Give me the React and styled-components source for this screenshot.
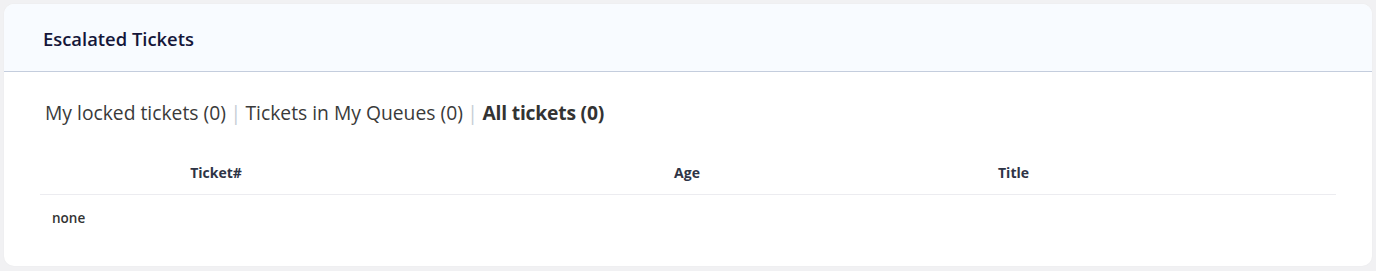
import styled, { createGlobalStyle } from 'styled-components'

const GlobalStyle = createGlobalStyle`
  html, body {
    margin: 0;
    padding: 0;
    background: #f1f1f3;
  }
  body {
    font-family: "Open Sans", "Noto Sans", sans-serif;
    color: #333;
  }
`

const tabs = [
  { label: 'My locked tickets', count: 0 },
  { label: 'Tickets in My Queues', count: 0 },
  { label: 'All tickets', count: 0, active: true },
]

function App() {
  return (
    <>
      <GlobalStyle />
      <StPage>
        <StCard>
          <StHeader>
            <StTitle>Escalated Tickets</StTitle>
          </StHeader>

          <StBody>
            <StTabs>
              {tabs.map((tab, i) => (
                <span key={tab.label}>
                  {i > 0 && <StSep>|</StSep>}
                  <StTab $active={tab.active}>
                    {tab.label} ({tab.count})
                  </StTab>
                </span>
              ))}
            </StTabs>

            <StTable>
              <StHeadRow>
                <StTh $align="center">Ticket#</StTh>
                <StTh $align="center">Age</StTh>
                <StTh $align="left">Title</StTh>
              </StHeadRow>
              <StRow>
                <StTd>none</StTd>
              </StRow>
            </StTable>
          </StBody>
        </StCard>
      </StPage>
    </>
  )
}

const StPage = styled.div`
  padding: 4px 4px 5px 4px;
`

const StCard = styled.section`
  background: #fff;
  border-radius: 10px;
  overflow: hidden;
  box-shadow: 0 0 2px rgba(0, 0, 0, 0.04);
`

const StHeader = styled.header`
  display: flex;
  align-items: center;
  box-sizing: border-box;
  height: 68px;
  padding: 2px 39px 0 39px;
  background: #f8fbff;
  border-bottom: 1px solid #c4cddd;
`

const StTitle = styled.h2`
  margin: 0;
  font-size: 18.4px;
  font-weight: 600;
  color: #15163a;
`

const StBody = styled.div`
  padding: 28px 36px 25px 36px;
`

const StTabs = styled.div`
  display: flex;
  align-items: center;
  font-size: 19.3px;
  line-height: 26px;
  margin-left: 5px;
`

const StTab = styled.span`
  font-weight: ${(p) => (p.$active ? 700 : 400)};
  color: ${(p) => (p.$active ? '#333' : '#3a3a3a')};
  letter-spacing: ${(p) => (p.$active ? '-0.2px' : '0')};
`

const StSep = styled.span`
  color: #c5cdd5;
  margin: 0 4.5px;
`

const StTable = styled.div`
  margin-top: 25px;
`

const StHeadRow = styled.div`
  display: grid;
  grid-template-columns: 352px 590px 1fr;
  height: 43px;
  align-items: center;
  border-bottom: 1px solid #ececf0;
`

const StTh = styled.div`
  font-size: 14px;
  font-weight: 700;
  color: #2e3446;
  text-align: ${(p) => p.$align};
  padding-left: ${(p) => (p.$align === 'left' ? '16px' : '0')};
`

const StRow = styled.div`
  display: flex;
  align-items: center;
  height: 46px;
  padding-left: 12px;
`

const StTd = styled.div`
  font-size: 13.5px;
  font-weight: 600;
  color: #333;
`

export default App
